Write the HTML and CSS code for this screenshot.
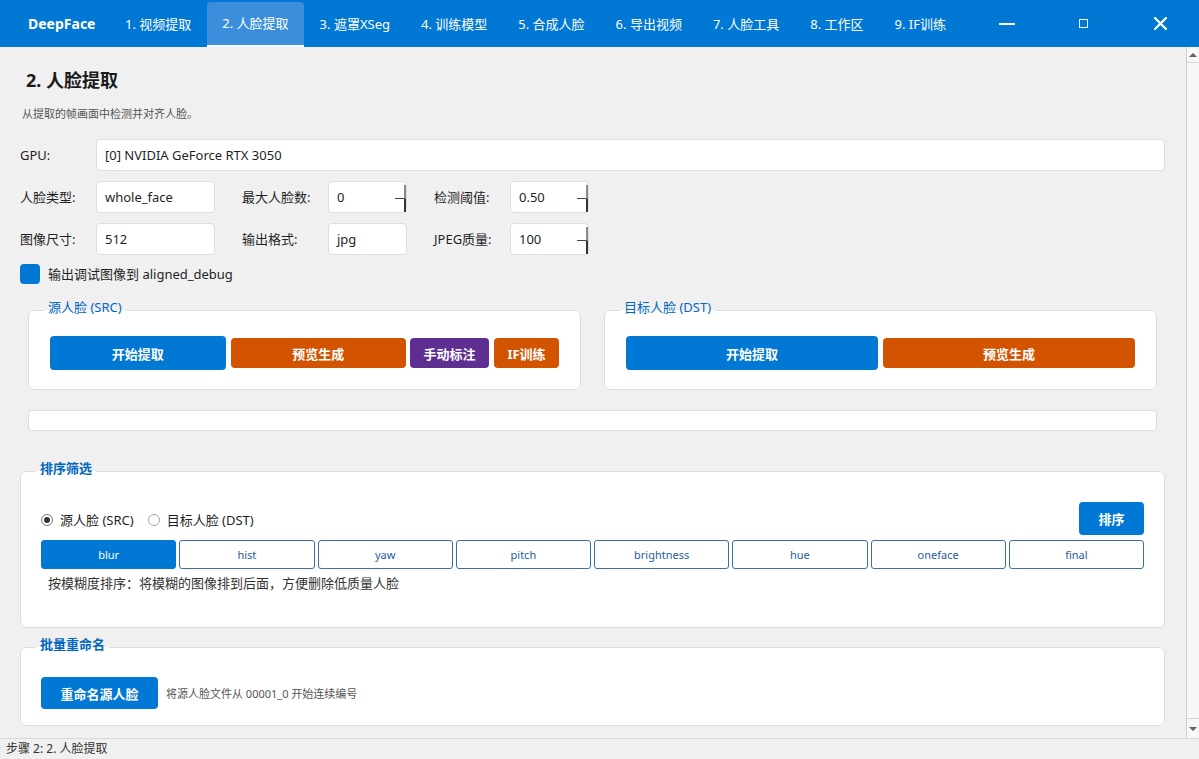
FILE: index.html
```html
<!DOCTYPE html>
<html lang="zh-CN">
<head>
    <meta charset="UTF-8" />
    <meta name="viewport" content="width=device-width, initial-scale=1.0" />
    <title>DeepFace</title>
    <link rel="stylesheet" href="styles.css">
</head>
<body>
    <div class="app">
        <header class="titlebar">
            <div class="brand">DeepFace</div>
            <nav class="tabs">
                <span class="tab">1. 视频提取</span>
                <span class="tab tab--active">2. 人脸提取</span>
                <span class="tab">3. 遮罩XSeg</span>
                <span class="tab">4. 训练模型</span>
                <span class="tab">5. 合成人脸</span>
                <span class="tab">6. 导出视频</span>
                <span class="tab">7. 人脸工具</span>
                <span class="tab">8. 工作区</span>
                <span class="tab">9. IF训练</span>
            </nav>
            <div class="controls">
                <span class="control">
                    <svg width="16" height="4" viewBox="0 0 16 4"><rect x="0" y="1" width="16" height="2" fill="#fff"/></svg>
                </span>
                <span class="control">
                    <svg width="9" height="9" viewBox="0 0 9 9"><rect x="0.5" y="0.5" width="8" height="8" fill="none" stroke="#fff" stroke-width="1"/></svg>
                </span>
                <span class="control">
                    <svg width="13" height="13" viewBox="0 0 13 13"><path d="M1 1 L12 12 M12 1 L1 12" stroke="#fff" stroke-width="2.2" stroke-linecap="round"/></svg>
                </span>
            </div>
        </header>

        <div class="workspace">
            <main class="page">
                <h1>2. 人脸提取</h1>
                <p class="subtitle">从提取的帧画面中检测并对齐人脸。</p>

                <div class="field-row field-row--first">
                    <span class="label">GPU:</span>
                    <div class="input input--gpu">[0] NVIDIA GeForce RTX 3050</div>
                </div>
                <div class="field-row">
                    <span class="label">人脸类型:</span>
                    <div class="input input--text">whole_face</div>
                    <span class="label label--wide">最大人脸数:</span>
                    <div class="input input--spin">0<span class="spin"><i class="spin-up"></i><i class="spin-down"></i></span></div>
                    <span class="label">检测阈值:</span>
                    <div class="input input--spin">0.50<span class="spin"><i class="spin-up"></i><i class="spin-down"></i></span></div>
                </div>
                <div class="field-row">
                    <span class="label">图像尺寸:</span>
                    <div class="input input--text">512</div>
                    <span class="label label--wide">输出格式:</span>
                    <div class="input input--short">jpg</div>
                    <span class="label">JPEG质量:</span>
                    <div class="input input--spin">100<span class="spin"><i class="spin-up"></i><i class="spin-down"></i></span></div>
                </div>
                <div class="check-row">
                    <span class="checkbox"></span>
                    <span>输出调试图像到 aligned_debug</span>
                </div>

                <div class="groups">
                    <fieldset class="group">
                        <legend>源人脸 (SRC)</legend>
                        <div class="btn-row">
                            <button class="btn btn--primary btn--grow">开始提取</button>
                            <button class="btn btn--orange btn--grow">预览生成</button>
                            <button class="btn btn--purple btn--manual">手动标注</button>
                            <button class="btn btn--orange btn--if">IF训练</button>
                        </div>
                    </fieldset>
                    <fieldset class="group">
                        <legend>目标人脸 (DST)</legend>
                        <div class="btn-row">
                            <button class="btn btn--primary btn--grow">开始提取</button>
                            <button class="btn btn--orange btn--grow">预览生成</button>
                        </div>
                    </fieldset>
                </div>

                <div class="progress"></div>

                <fieldset class="group group--sort">
                    <legend class="legend--bold">排序筛选</legend>
                    <div class="sort-top">
                        <div class="radios">
                            <span class="radio radio--on"></span>
                            <span class="radio-label">源人脸 (SRC)</span>
                            <span class="radio"></span>
                            <span class="radio-label">目标人脸 (DST)</span>
                        </div>
                        <button class="btn btn--primary btn--sort">排序</button>
                    </div>
                    <div class="sort-options">
                        <button class="opt opt--active">blur</button>
                        <button class="opt">hist</button>
                        <button class="opt">yaw</button>
                        <button class="opt">pitch</button>
                        <button class="opt">brightness</button>
                        <button class="opt">hue</button>
                        <button class="opt">oneface</button>
                        <button class="opt">final</button>
                    </div>
                    <p class="sort-desc">按模糊度排序：将模糊的图像排到后面，方便删除低质量人脸</p>
                </fieldset>

                <fieldset class="group group--rename">
                    <legend class="legend--bold">批量重命名</legend>
                    <div class="rename-row">
                        <button class="btn btn--primary btn--rename">重命名源人脸</button>
                        <span class="note">将源人脸文件从 00001_0 开始连续编号</span>
                    </div>
                </fieldset>
            </main>
            <div class="scrollbar">
                <span class="scroll-btn scroll-btn--up"><i class="arrow-up"></i></span>
                <span class="scroll-btn scroll-btn--down"><i class="arrow-down"></i></span>
            </div>
        </div>

        <footer class="status">步骤 2: 2. 人脸提取</footer>
    </div>
</body>
</html>
```

FILE: styles.css
```css
* {
    box-sizing: border-box;
}
html, body {
    margin: 0;
    padding: 0;
}
body {
    font-family: "Noto Sans", "Noto Sans CJK SC", sans-serif;
    font-size: 13px;
    color: #1f1f1f;
    background-color: #f0f0f0;
}
.app {
    height: 759px;
    display: flex;
    flex-direction: column;
    overflow: hidden;
}

/* title bar */
.titlebar {
    height: 47px;
    flex-shrink: 0;
    display: flex;
    background-color: #0078d4;
    color: #fff;
    padding-left: 28px;
    white-space: nowrap;
}
.brand {
    display: flex;
    align-items: center;
    flex-shrink: 0;
    font-weight: 700;
    font-size: 14px;
    margin-right: 14px;
}
.tabs {
    display: flex;
    flex-shrink: 0;
}
.tab {
    display: flex;
    align-items: center;
    flex-shrink: 0;
    padding: 0 15.5px;
    font-size: 13px;
    line-height: 18px;
}
.tab--active {
    margin-top: 2px;
    padding-bottom: 4px;
    background-color: #3a8edb;
    border-radius: 4px 4px 0 0;
    box-shadow: inset 0 -2px 0 #f4f8fc;
}
.controls {
    margin-left: auto;
    display: flex;
    min-width: 0;
}
.control {
    width: 77px;
    flex-shrink: 1;
    display: flex;
    align-items: center;
    justify-content: center;
}

/* page */
.workspace {
    flex: 1;
    display: flex;
    min-height: 0;
}
.page {
    flex: 1;
    padding: 21px 21px 0 20px;
    overflow: hidden;
}
h1 {
    margin: 0;
    padding-left: 6px;
    font-size: 18px;
    line-height: 24px;
    font-weight: 700;
    color: #1a1a1a;
}
.subtitle {
    margin: 14px 0 0;
    padding-left: 2px;
    font-size: 11px;
    line-height: 16px;
    color: #555;
}
.field-row {
    display: flex;
    align-items: center;
    height: 32px;
    margin-top: 10px;
}
.field-row--first {
    margin-top: 17px;
}
.label {
    width: 76px;
    flex-shrink: 0;
    line-height: 18px;
}
.label--wide {
    width: 86px;
}
.input {
    height: 32px;
    display: flex;
    align-items: center;
    padding: 0 8px;
    background-color: #fff;
    border: 1px solid #dedede;
    border-radius: 4px;
    line-height: 18px;
}
.input--gpu {
    flex: 1;
}
.input--text {
    width: 119px;
    margin-right: 27px;
}
.input--short {
    width: 79px;
    margin-right: 27px;
}
.input--spin {
    width: 79px;
    padding-right: 0;
}
.field-row .input--spin:nth-of-type(2) {
    margin-right: 27px;
}
.spin {
    margin-left: auto;
    width: 11px;
    align-self: stretch;
    display: flex;
    flex-direction: column;
    padding-top: 3px;
}
.spin-up {
    flex: 1;
    border-right: 2px solid #8a8a8a;
    border-bottom: 1px solid #444;
}
.spin-down {
    flex: 1;
    border-right: 2px solid #333;
}
.check-row {
    display: flex;
    align-items: center;
    gap: 8px;
    height: 20px;
    margin-top: 9px;
    line-height: 18px;
}
.checkbox {
    width: 20px;
    height: 20px;
    border-radius: 4px;
    background-color: #0078d4;
}

/* groups */
.groups {
    display: flex;
    gap: 23px;
    margin: 14px 8px 0;
}
.group {
    flex: 1;
    min-width: 0;
    margin: 0;
    background-color: #fff;
    border: 1px solid #dcdcdc;
    border-radius: 6px;
    padding: 14px 21px 19px;
}
legend {
    margin-left: -6px;
    padding: 0 4px 6px;
    font-size: 13px;
    line-height: 18px;
    color: #0067c0;
}
.legend--bold {
    margin-left: -5px;
    font-weight: 700;
}
.btn-row {
    display: flex;
    align-items: center;
    gap: 5px;
}
.btn {
    height: 30px;
    border: none;
    border-radius: 4px;
    color: #fff;
    font-family: inherit;
    font-size: 13px;
    font-weight: 700;
    padding: 0;
}
.btn--primary {
    height: 34px;
    background-color: #0078d4;
}
.btn--orange {
    background-color: #d35400;
}
.btn--purple {
    background-color: #5f2e91;
}
.btn--grow {
    flex: 1;
}
.btn--manual {
    width: 79px;
    margin-left: -1px;
}
.btn--if {
    width: 65px;
}
.progress {
    height: 21px;
    margin: 20px 8px 0;
    background-color: #fff;
    border: 1px solid #dcdcdc;
    border-radius: 4px;
}

/* sort */
.group--sort {
    margin-top: 28px;
    padding: 19px 20px 35px;
}
.sort-top {
    display: flex;
    align-items: center;
    justify-content: space-between;
    height: 33px;
}
.radios {
    display: flex;
    align-items: center;
    padding-top: 3px;
}
.radio {
    width: 12px;
    height: 12px;
    border-radius: 50%;
    border: 1px solid #a8a8a8;
    background-color: #fff;
    display: flex;
    align-items: center;
    justify-content: center;
}
.radio--on {
    border-color: #777;
}
.radio--on::after {
    content: "";
    width: 6px;
    height: 6px;
    border-radius: 50%;
    background-color: #333;
}
.radio-label {
    margin: 0 14px 0 7px;
    line-height: 18px;
}
.btn--sort {
    width: 65px;
    height: 33px;
}
.sort-options {
    display: flex;
    gap: 3px;
    margin-top: 5px;
}
.opt {
    flex: 1;
    height: 29px;
    padding: 0;
    border: 1px solid #3b6fa3;
    border-radius: 3px;
    background-color: #fff;
    color: #1f5d9c;
    font-family: inherit;
    font-size: 11px;
}
.opt--active {
    background-color: #0078d4;
    border-color: #0078d4;
    color: #fff;
}
.sort-desc {
    margin: 5px 0 0;
    padding-left: 7px;
    line-height: 18px;
    color: #333;
}

/* rename */
.group--rename {
    margin-top: 7px;
    padding: 18px 20px 16px;
}
.rename-row {
    display: flex;
    align-items: center;
    gap: 8px;
}
.btn--rename {
    width: 117px;
    height: 32px;
}
.note {
    font-size: 11px;
    color: #555;
}

/* scrollbar + status */
.scrollbar {
    width: 13px;
    flex-shrink: 0;
    display: flex;
    flex-direction: column;
    justify-content: space-between;
    background-color: #f7f7f7;
    border-left: 1px solid #d0d0d0;
}
.scroll-btn {
    height: 16px;
    display: flex;
    align-items: center;
    justify-content: center;
}
.scroll-btn--up {
    border-bottom: 1px solid #d8d8d8;
}
.scroll-btn--down {
    height: 20px;
    border-top: 1px solid #d8d8d8;
}
.arrow-up {
    border-left: 4px solid transparent;
    border-right: 4px solid transparent;
    border-bottom: 4px solid #606060;
}
.arrow-down {
    border-left: 4px solid transparent;
    border-right: 4px solid transparent;
    border-top: 4px solid #606060;
}
.status {
    height: 21px;
    flex-shrink: 0;
    padding-left: 6px;
    border-top: 1px solid #d8d8d8;
    background-color: #f0f0f0;
    font-size: 12px;
    line-height: 20px;
    color: #333;
}
```
